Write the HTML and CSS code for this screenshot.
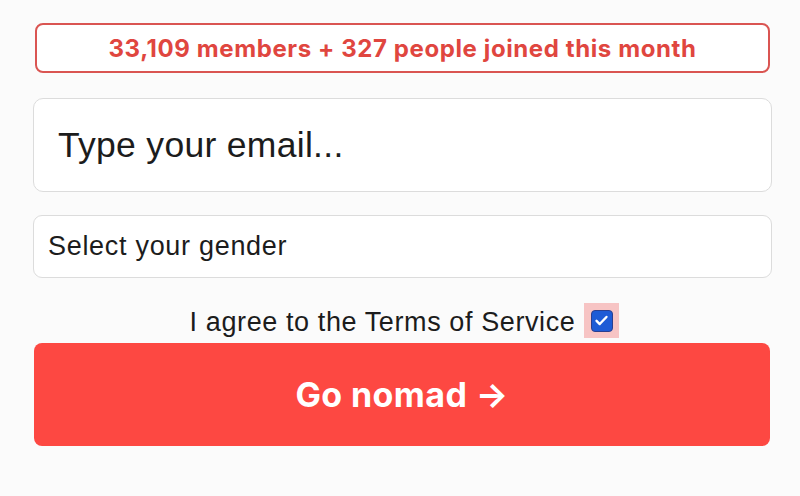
FILE: index.html
```html
<!DOCTYPE html>
<html>
<head>
<meta charset="utf-8">
<link rel="stylesheet" href="styles.css">
</head>
<body>
<div class="form">
  <div class="banner">33,109 members + 327 people joined this month</div>
  <div class="email">Type your email...</div>
  <div class="select">Select your gender</div>
  <div class="agree">
    <span class="agree-text">I agree to the Terms of Service</span>
    <span class="check-halo"><span class="check"><svg viewBox="0 0 24 24" width="17" height="17"><path d="M5 12.5l4.5 4.5L19 7" fill="none" stroke="#fff" stroke-width="3.4" stroke-linecap="round" stroke-linejoin="round"/></svg></span></span>
  </div>
  <div class="button">Go nomad →</div>
</div>
</body>
</html>
```
FILE: styles.css
```css
html, body {
  margin: 0;
  padding: 0;
  background: #fbfbfb;
  width: 800px;
  height: 496px;
  overflow: hidden;
}
.form {
  display: flex;
  flex-direction: column;
  padding: 23px 28px 0 33px;
  font-family: "Liberation Sans", Arial, sans-serif;
}
.banner {
  margin: 0 2px 0 2px;
  height: 50px;
  box-sizing: border-box;
  border: 2px solid #da5552;
  border-radius: 8px;
  background: #fff;
  color: #e0463f;
  font-family: Inter, sans-serif;
  font-weight: 700;
  font-size: 24px;
  letter-spacing: 0.6px;
  display: flex;
  align-items: center;
  justify-content: center;
}
.email {
  margin-top: 25px;
  height: 94px;
  box-sizing: border-box;
  border: 1.5px solid #dcdcdc;
  border-radius: 10px;
  background: #fff;
  color: #1c1c1c;
  font-size: 35.5px;
  letter-spacing: 0.3px;
  padding-left: 24px;
  display: flex;
  align-items: center;
}
.select {
  margin-top: 23px;
  height: 63px;
  box-sizing: border-box;
  border: 1.5px solid #dcdcdc;
  border-radius: 9px;
  background: #fff;
  color: #1c1c1c;
  font-size: 27px;
  letter-spacing: 0.7px;
  padding-left: 14px;
  display: flex;
  align-items: center;
}
.agree {
  margin-top: 25px;
  height: 35px;
  display: flex;
  align-items: center;
  justify-content: center;
  gap: 9px;
  padding-left: 4px;
}
.agree-text {
  font-size: 27px;
  letter-spacing: 0.6px;
  color: #1c1c1c;
  padding-top: 4px;
}
.check-halo {
  width: 35px;
  height: 35px;
  background: #f7c4c4;
  display: flex;
  align-items: center;
  justify-content: center;
}
.check {
  width: 22px;
  height: 22px;
  border-radius: 4px;
  background: #1e5bd6;
  border: 1px solid #2b3f8f;
  box-sizing: border-box;
  display: flex;
  align-items: center;
  justify-content: center;
}
.button {
  margin: 5px 2px 0 1px;
  height: 103px;
  border-radius: 8px;
  background: #fd4842;
  color: #fff;
  font-family: Inter, sans-serif;
  font-weight: 700;
  font-size: 34px;
  letter-spacing: 0.4px;
  display: flex;
  align-items: center;
  justify-content: center;
}
```
